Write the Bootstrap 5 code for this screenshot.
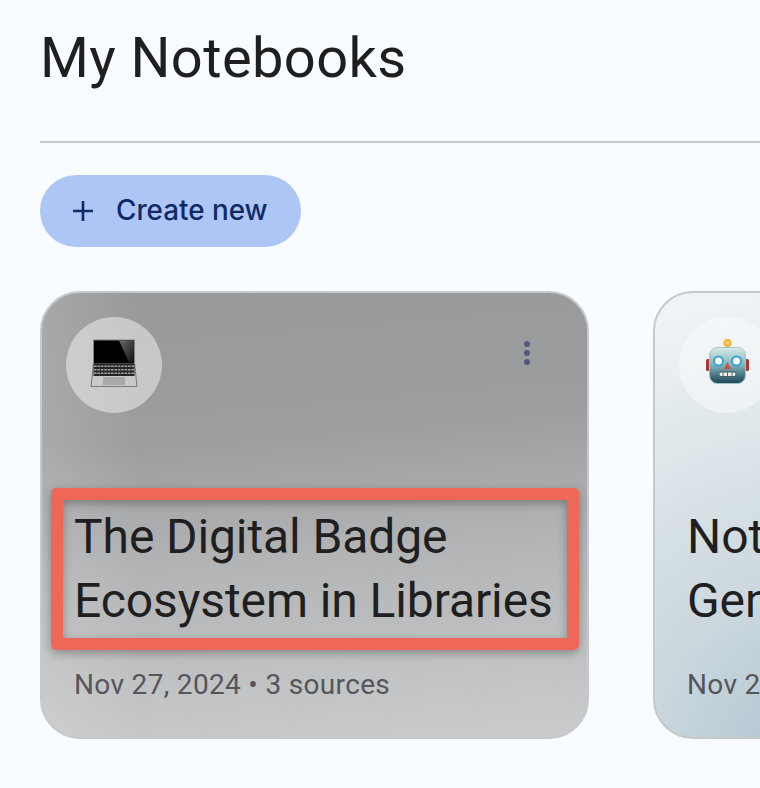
<!DOCTYPE html>
<html lang="en">
<head>
<meta charset="utf-8">
<title>My Notebooks</title>
<link href="https://cdn.jsdelivr.net/npm/bootstrap@5.3.0/dist/css/bootstrap.min.css" rel="stylesheet">
<style>
html,body{height:100%}
body{background:#f8fbff;overflow:hidden;font-family:Roboto,"Liberation Sans",sans-serif;color:#1f1f1f}
.page-wrap{padding:0 0 0 40px;width:760px;height:788px;overflow:hidden}
.page-heading{font-family:Roboto,sans-serif;font-size:56px;line-height:64px;font-weight:400;letter-spacing:.4px;margin:26px 0 0;padding:0 0 20px;height:117px;border-bottom:2px solid #c6c8ca;color:#1f1f1f;white-space:nowrap}
.create-btn{margin-top:32px;height:72px;width:261px;border:0;border-radius:36px;background:#aec6f6;color:#0f2a66;font-family:Inter,sans-serif;font-weight:550;font-size:27.800px;letter-spacing:0;padding:0 0 0 32px;gap:22px}
.create-btn:hover{background:#aec6f6;color:#0f2a66}
.nb-row{margin-top:44px;gap:64px;width:1300px}
.nb-card{width:549px;height:448px;border:2px solid #c6c8c9;border-radius:40px;flex:none;position:relative;padding:24px 24px 0 32px}
.nb-grey{background:linear-gradient(90deg,rgba(255,255,255,.14) 0%,rgba(255,255,255,0) 18%),linear-gradient(175deg,#98999b 0%,#9c9d9f 32%,#b4b5b7 60%,#cbcccd 100%)}
.nb-blue{background:radial-gradient(circle at 160px 460px,#b2c7d1 0,#b8cbd4 60px,#ccd8de 170px,#d8e2e6 280px,#eff3f6 460px)}
.emoji-disc{width:96px;height:96px;border-radius:50%;margin-left:-8px;background:rgba(255,255,255,.45)}
.nb-blue .emoji-disc{background:rgba(255,255,255,.4)}
.emoji-art{display:block;margin-top:-4px}
.kebab{position:absolute;top:48px;right:55px;width:10px;display:flex;flex-direction:column;gap:3px;align-items:center}
.kebab i{display:block;width:6px;height:6px;border-radius:50%;background:#50587f}
.nb-title{font-family:Roboto,sans-serif;font-size:48px;line-height:64px;letter-spacing:-.1px;margin:92px 0 0;font-weight:400;color:#1f1f1f;white-space:nowrap;position:relative}
.nb-meta{font-family:Roboto,sans-serif;font-size:28px;line-height:36px;color:#55565a;margin-top:34px;letter-spacing:.33px;white-space:nowrap}
.call-out{position:absolute;left:-23px;top:-17px;width:528px;height:162px;border:12px solid #ef6757;border-radius:5px;box-shadow:0 3px 10px rgba(0,0,0,.3),inset 0 3px 10px rgba(0,0,0,.3);pointer-events:none}
</style>
</head>
<body>
<main class="page-wrap">
  <h1 class="page-heading">My Notebooks</h1>
  <button type="button" class="btn create-btn d-flex align-items-center">
    <svg width="22" height="22" viewBox="0 0 22 22" aria-hidden="true"><path d="M11 1v20M1 11h20" stroke="#0f2a66" stroke-width="2.6" fill="none"/></svg>
    <span>Create new</span>
  </button>
  <div class="d-flex nb-row">
    <section class="nb-card nb-grey">
      <div class="emoji-disc d-flex align-items-center justify-content-center">
        <svg class="emoji-art" width="48" height="48" viewBox="0 0 48 48" aria-hidden="true">
          <defs><linearGradient id="sh" x1="0" y1="0" x2="1" y2="1"><stop offset="0" stop-color="#6a6a6c"/><stop offset="1" stop-color="#111"/></linearGradient></defs>
          <path d="M3.500 24 1 47.500h46L44.500 24z" fill="#c8c9cb" stroke="#707173" stroke-width=".9"/>
          <rect x="3.500" y="1" width="41" height="24" fill="#000" stroke="#818284" stroke-width="1"/>
          <path d="M29 1.500h15v22h-5z" fill="url(#sh)"/>
          <rect x="3.500" y="25" width="41" height="12" fill="#262628"/>
          <path d="M4 27.300h40M4 30.700h40M4 34.200h40" stroke="#9c9d9f" stroke-width="1.500" stroke-dasharray="2.600 .8"/>
          <rect x="13" y="38" width="22" height="8" fill="#a7a8aa"/>
        </svg>
      </div>
      <div class="kebab" aria-hidden="true"><i></i><i></i><i></i></div>
      <h2 class="nb-title">The Digital Badge<br>Ecosystem in Libraries<span class="call-out"></span></h2>
      <div class="nb-meta">Nov 27, 2024 • 3 sources</div>
    </section>
    <section class="nb-card nb-blue">
      <div class="emoji-disc d-flex align-items-center justify-content-center">
        <svg class="emoji-art" width="48" height="48" viewBox="0 0 48 48" aria-hidden="true">
          <defs>
            <linearGradient id="rb" x1="0" y1="0" x2="0" y2="1"><stop offset="0" stop-color="#d8ecec"/><stop offset=".5" stop-color="#7fb0b8"/><stop offset="1" stop-color="#1a4656"/></linearGradient>
            <radialGradient id="bl"><stop offset="0" stop-color="#ffe27a"/><stop offset="1" stop-color="#f2a32e"/></radialGradient>
          </defs>
          <rect x="3" y="20" width="5" height="12" rx="1.500" fill="#a93a30"/>
          <rect x="41" y="20" width="5" height="12" rx="1.500" fill="#a93a30"/>
          <path d="M19 8a5.500 3.500 0 0 0 11 0z" fill="#5f4a8c"/>
          <circle cx="24.500" cy="4" r="4" fill="url(#bl)"/>
          <rect x="6.500" y="8.500" width="36" height="36" rx="8" fill="url(#rb)" stroke="#a8c4bf" stroke-width="1"/>
          <circle cx="15.500" cy="22" r="4.500" fill="#fff" stroke="#37a2d6" stroke-width="2"/>
          <circle cx="33.500" cy="22" r="4.500" fill="#fff" stroke="#37a2d6" stroke-width="2"/>
          <path d="M24.500 23l3.500 7h-7z" fill="#c9504a"/>
          <rect x="16" y="33" width="17" height="4.500" rx="2.200" fill="#eef0ee" stroke="#33494f" stroke-width=".8"/>
          <path d="M20 33v4.500M24.500 33v4.500M29 33v4.500" stroke="#33494f" stroke-width=".8"/>
        </svg>
      </div>
      <h2 class="nb-title">Notebook<br>Generation</h2>
      <div class="nb-meta">Nov 27, 2024 • 3 sources</div>
    </section>
  </div>
</main>
<script src="https://cdn.jsdelivr.net/npm/bootstrap@5.3.0/dist/js/bootstrap.bundle.min.js"></script>
</body>
</html>
